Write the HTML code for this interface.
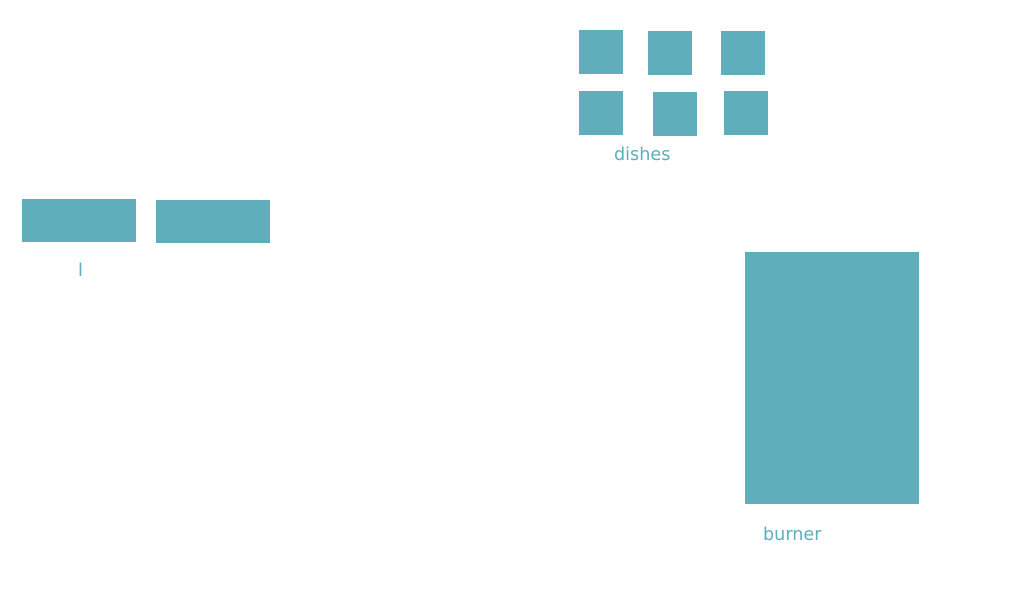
<!DOCTYPE html>
<html><head><style>
body{margin:0;width:1024px;height:600px;background:#fff;position:relative;overflow:hidden;font-family:"DejaVu Sans",sans-serif;}
.b{position:absolute;background:#60aebb;}
.t{position:absolute;color:#60aebb;font-size:17.6px;line-height:20px;white-space:nowrap;}
</style></head><body>
<div class="b" style="left:579px;top:30px;width:44px;height:44px"></div>
<div class="b" style="left:648px;top:31px;width:44px;height:44px"></div>
<div class="b" style="left:721px;top:31px;width:44px;height:44px"></div>
<div class="b" style="left:579px;top:91px;width:44px;height:44px"></div>
<div class="b" style="left:653px;top:92px;width:44px;height:44px"></div>
<div class="b" style="left:724px;top:91px;width:44px;height:44px"></div>
<div class="t" style="left:614px;top:145px">dishes</div>
<div class="b" style="left:22px;top:199px;width:114px;height:43px"></div>
<div class="b" style="left:156px;top:200px;width:114px;height:43px"></div>
<div class="t" style="left:78px;top:261px">l</div>
<div class="b" style="left:745px;top:252px;width:174px;height:252px"></div>
<div class="t" style="left:763px;top:525px">burner</div>
</body></html>
